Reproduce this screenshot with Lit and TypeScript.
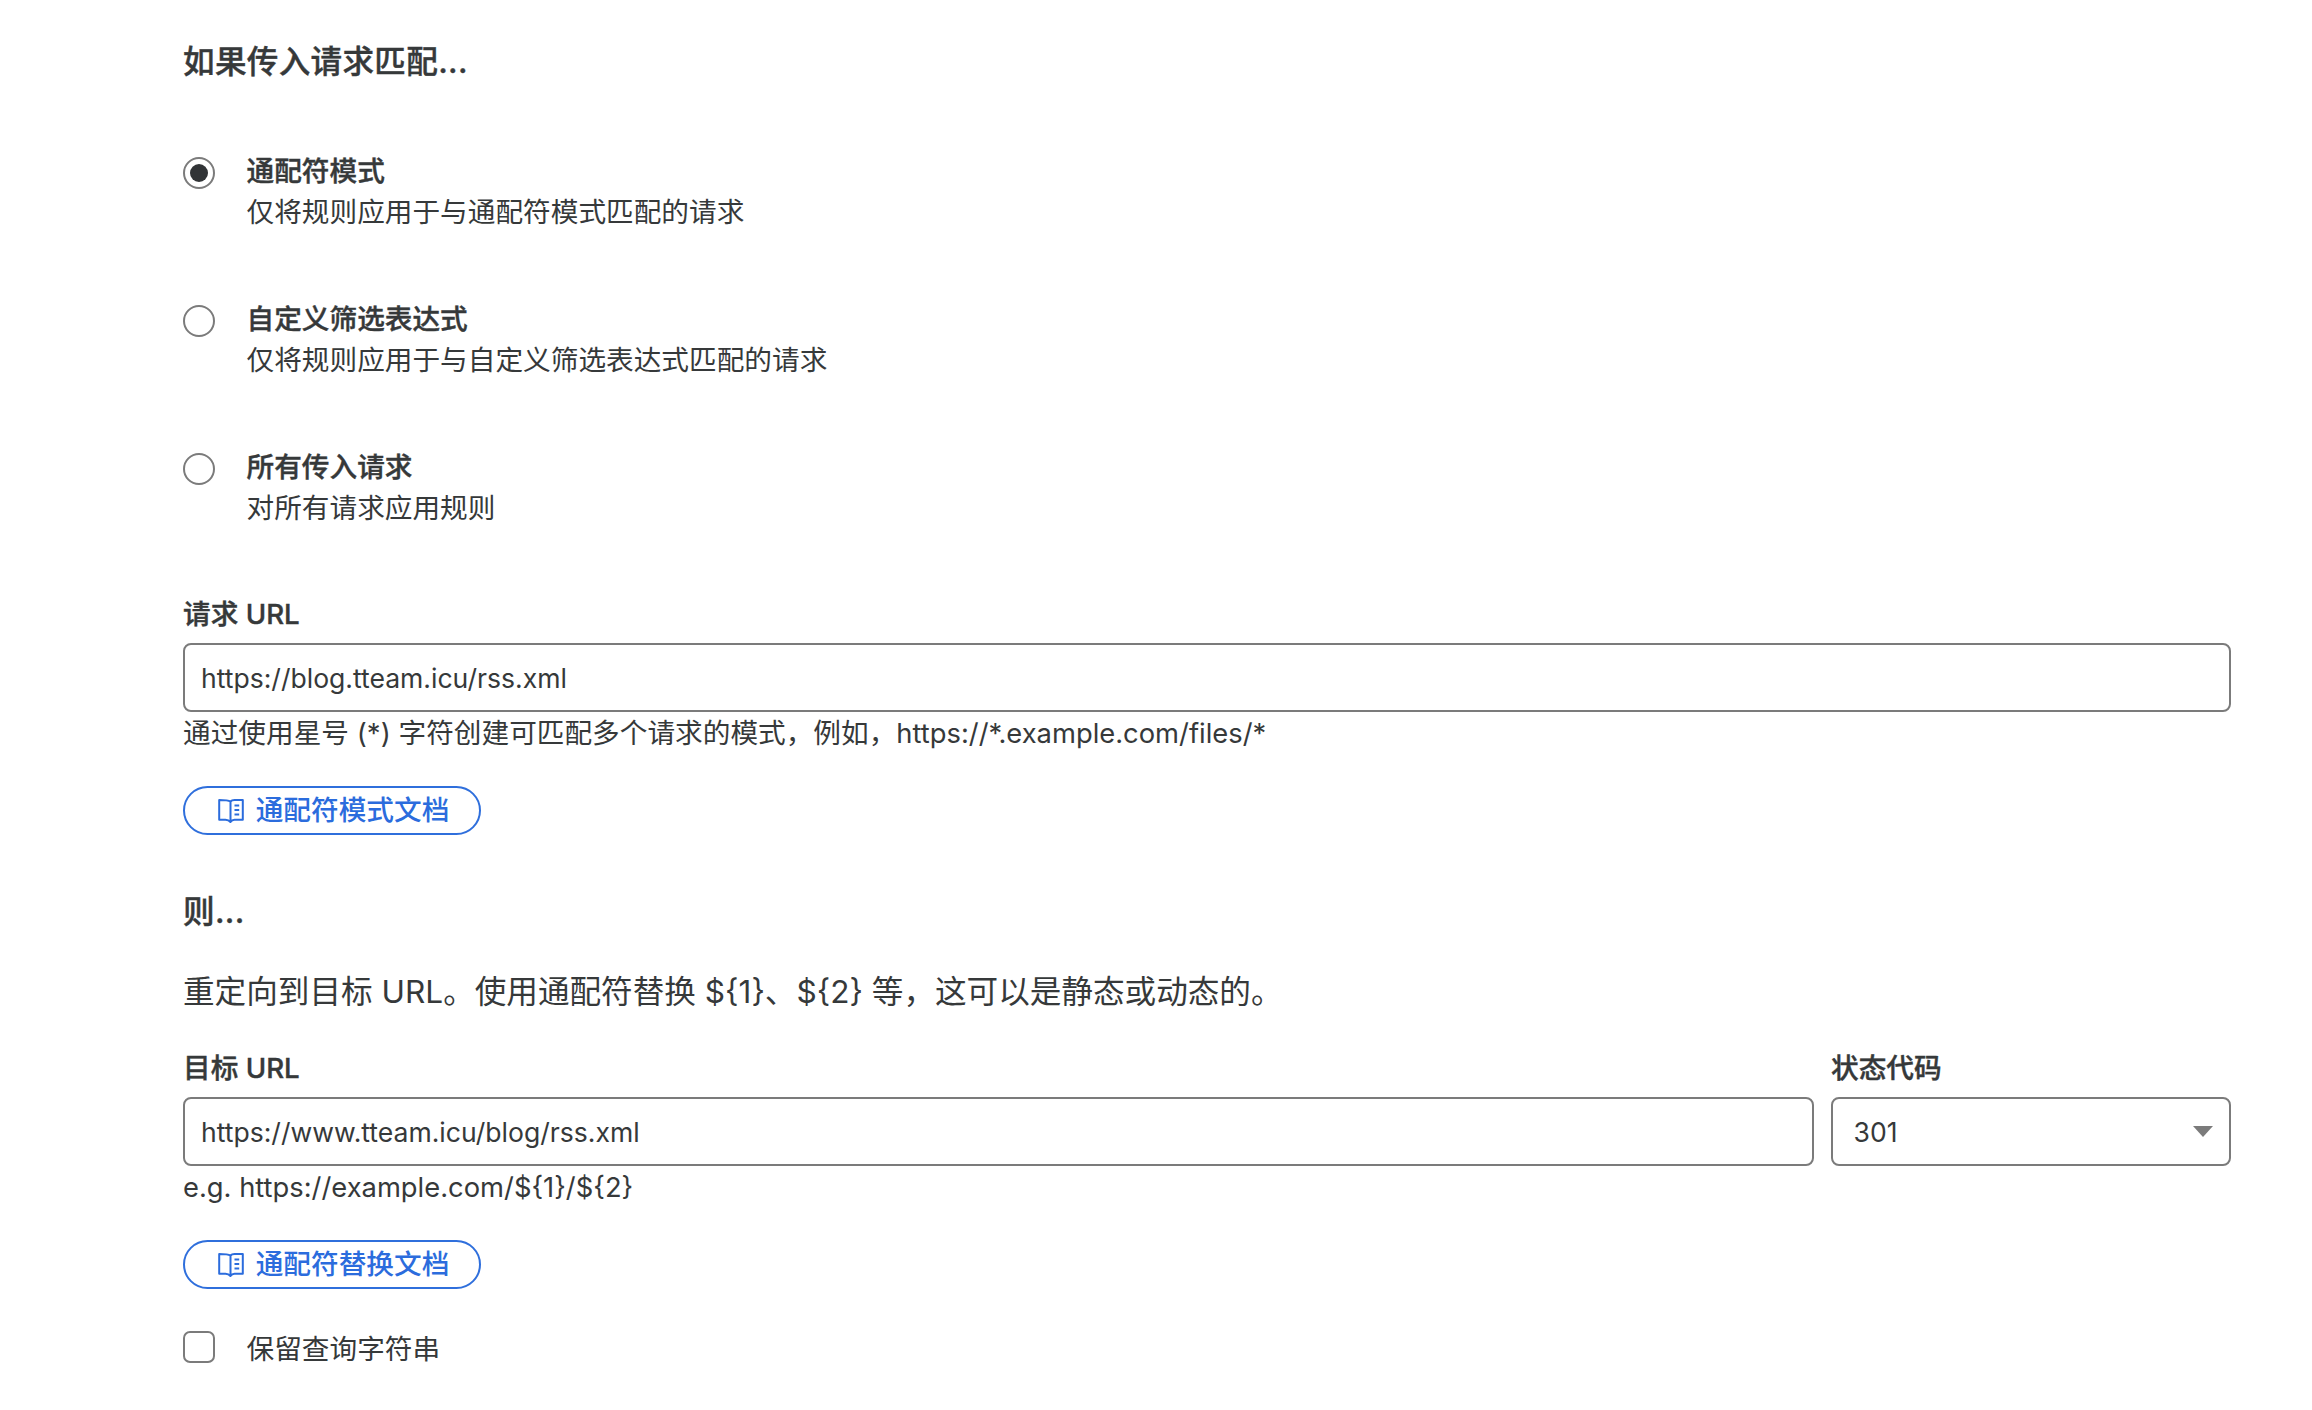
import { LitElement, html, css, svg } from "lit";
import { customElement } from "lit/decorators.js";

const bookIcon = svg`<svg class="book" viewBox="0 0 26 24" fill="none" stroke="currentColor" stroke-width="2" stroke-linejoin="round">
  <path d="M12.5 2.6V23M12.5 2.6C10.5 1.3 7 1 1.2 1V20.8H7.5C9.8 20.8 11.2 21.5 12.5 23C13.5 21.5 14.6 20.8 16.5 20.8H24.8V1H16.5C14.6 1 13.5 1.3 12.5 2.6Z"/>
  <path d="M16.5 6.5H21.2M16.5 11H21.2M16.5 15.5H21.2" stroke-width="1.8"/>
</svg>`;

@customElement("app-root")
export class AppRoot extends LitElement {
  static styles = css`
    :host {
      display: block;
      width: 2312px;
      min-height: 1410px;
      background: #fff;
      color: #36393a;
      font-family: Inter, "Noto Sans CJK SC", sans-serif;
      font-size: 27.66px;
      box-sizing: border-box;
    }
    .page {
      display: flex;
      flex-direction: column;
      box-sizing: border-box;
      padding: 39.5px 81px 0 183px;
    }
    .heading {
      font-size: 31.6px;
      font-weight: 500;
      line-height: 44px;
      letter-spacing: 0.3px;
      -webkit-text-stroke: 0.4px currentColor;
    }
    .radios {
      display: flex;
      flex-direction: column;
      gap: 66px;
      margin-top: 67px;
    }
    .radio-row {
      display: flex;
      gap: 31.5px;
      height: 82px;
    }
    .radio {
      flex: none;
      width: 32px;
      height: 32px;
      margin-top: 6.5px;
      box-sizing: border-box;
      border: 2.4px solid #7b7b7b;
      border-radius: 50%;
      display: flex;
      align-items: center;
      justify-content: center;
      background: #fff;
    }
    .radio i {
      display: block;
      width: 18px;
      height: 18px;
      border-radius: 50%;
      background: #313436;
    }
    .title {
      font-weight: 500;
      line-height: 41px;
      -webkit-text-stroke: 0.4px currentColor;
    }
    .desc {
      line-height: 41px;
    }
    .label {
      font-weight: 500;
      line-height: 40px;
      -webkit-text-stroke: 0.4px currentColor;
    }
    .url-label {
      margin-top: 65.5px;
    }
    .field {
      box-sizing: border-box;
      height: 68.5px;
      margin-top: 9px;
      border: 2.4px solid #7b7b7b;
      border-radius: 8px;
      padding: 1px 16px 0;
      display: flex;
      align-items: center;
      background: #fff;
      font-size: 26.55px;
    }
    .hint {
      line-height: 41px;
      margin-top: 1px;
    }
    .latin {
      font-size: 27.35px;
    }
    .btn {
      align-self: flex-start;
      box-sizing: border-box;
      display: flex;
      align-items: center;
      justify-content: center;
      gap: 12px;
      width: 298px;
      height: 49px;
      margin-top: 32px;
      padding: 1.5px 0 0 3px;
      border: 2.4px solid #2f6fdc;
      border-radius: 25px;
      color: #2b6cdd;
      font-weight: 500;
      line-height: 1;
    }
    .book {
      width: 26px;
      height: 24px;
      flex: none;
    }
    .then {
      margin-top: 55px;
    }
    .para {
      font-size: 31.6px;
      line-height: 44px;
      margin-top: 36px;
    }
    .grid {
      display: grid;
      grid-template-columns: minmax(0, 1fr) 400px;
      column-gap: 17px;
      margin-top: 34.5px;
    }
    .select {
      justify-content: space-between;
      padding-left: 20.5px;
      padding-right: 16px;
    }
    .caret {
      width: 0;
      height: 0;
      border-left: 10.5px solid transparent;
      border-right: 10.5px solid transparent;
      border-top: 11px solid #7b7b7b;
    }
    .check-row {
      display: flex;
      align-items: center;
      gap: 31.5px;
      margin-top: 38px;
    }
    .check {
      flex: none;
      box-sizing: border-box;
      width: 32px;
      height: 32px;
      border: 2.4px solid #7b7b7b;
      border-radius: 7px;
    }
  `;

  private radioRow(title: string, desc: string, checked = false) {
    return html`<div class="radio-row">
      <span class="radio">${checked ? html`<i></i>` : ""}</span>
      <div>
        <div class="title">${title}</div>
        <div class="desc">${desc}</div>
      </div>
    </div>`;
  }

  render() {
    return html`<div class="page">
      <div class="heading">如果传入请求匹配...</div>
      <div class="radios">
        ${this.radioRow("通配符模式", "仅将规则应用于与通配符模式匹配的请求", true)}
        ${this.radioRow("自定义筛选表达式", "仅将规则应用于与自定义筛选表达式匹配的请求")}
        ${this.radioRow("所有传入请求", "对所有请求应用规则")}
      </div>
      <div class="label url-label">请求 URL</div>
      <div class="field">https://blog.tteam.icu/rss.xml</div>
      <div class="hint">通过使用星号 (*) 字符创建可匹配多个请求的模式，例如，<span class="latin">https://*.example.com/files/*</span></div>
      <div class="btn">${bookIcon}<span>通配符模式文档</span></div>
      <div class="heading then">则...</div>
      <div class="para">重定向到目标 URL。使用通配符替换 \${1}、\${2} 等，这可以是静态或动态的。</div>
      <div class="grid">
        <div>
          <div class="label">目标 URL</div>
          <div class="field">https://www.tteam.icu/blog/rss.xml</div>
        </div>
        <div>
          <div class="label">状态代码</div>
          <div class="field select"><span>301</span><span class="caret"></span></div>
        </div>
      </div>
      <div class="hint"><span class="latin">e.g. https://example.com/\${1}/\${2}</span></div>
      <div class="btn">${bookIcon}<span>通配符替换文档</span></div>
      <div class="check-row">
        <span class="check"></span>
        <span>保留查询字符串</span>
      </div>
    </div>`;
  }
}
